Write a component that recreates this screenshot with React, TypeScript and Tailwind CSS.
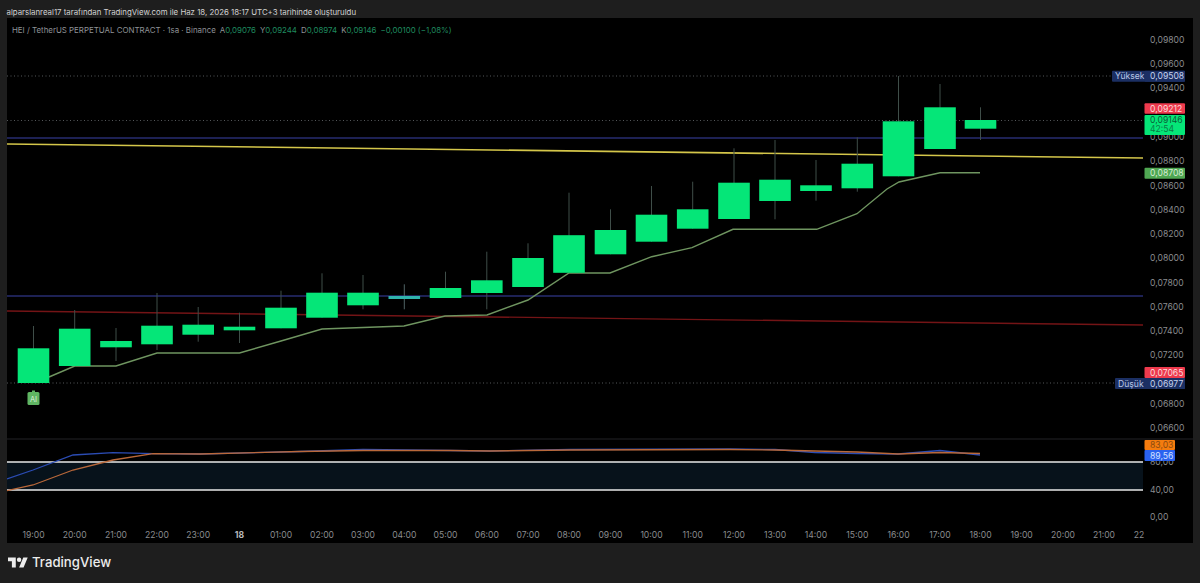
import React from 'react';

const FONT = 'font-[Inter,"Liberation_Sans",sans-serif]';

// [center x, body top, body bottom, wick top, wick bottom]
const candles: number[][] = [
  [33.5, 348.3, 383, 326, 383],
  [74.7, 328.7, 366, 310, 366],
  [116, 341, 347.3, 328, 361],
  [157, 325.7, 344.3, 293, 350],
  [198.2, 324.7, 334.7, 307, 341.7],
  [239.5, 326.7, 330.3, 312.7, 343],
  [281, 307.7, 328.3, 290.7, 328.3],
  [322, 292.7, 317.7, 273.3, 317.7],
  [363, 292.7, 305.3, 275, 309.3],
  [404.3, 296, 299, 284.3, 309.3],
  [445.5, 288, 298, 271.7, 298],
  [486.8, 280.3, 293, 251.7, 309.3],
  [528, 258, 287, 243.3, 287],
  [569, 235.2, 272.8, 192.7, 272.8],
  [610.5, 230, 254.3, 209.3, 254.3],
  [651.5, 214.7, 241.7, 186, 241.7],
  [692.7, 209.3, 228.7, 181.7, 228.7],
  [734, 182.7, 219, 148.3, 219],
  [775, 179.7, 201, 140, 219.3],
  [816, 185.3, 191, 160, 200.7],
  [857.3, 163.7, 188.3, 137.3, 191.7],
  [898.5, 121.3, 176.3, 76, 176.3],
  [940, 107.3, 149, 84, 149],
  [980.5, 120, 128.7, 107.3, 140],
];

const prices: [string, number][] = [
  ['0,09800', 39.5], ['0,09600', 63.8], ['0,09400', 88.1], ['0,09000', 137], ['0,08800', 161.3],
  ['0,08600', 185.6], ['0,08400', 209.6], ['0,08200', 233.9], ['0,08000', 258.2], ['0,07800', 282.5],
  ['0,07600', 306.8], ['0,07400', 331.1], ['0,07200', 355.4], ['0,06800', 404], ['0,06600', 428.3],
  ['80,00', 461.5], ['40,00', 489.7], ['0,00', 517],
];

const times: [string, number][] = [
  ['19:00', 33.5], ['20:00', 74.7], ['21:00', 116], ['22:00', 157], ['23:00', 198.2], ['18', 239.5],
  ['01:00', 281], ['02:00', 322], ['03:00', 363], ['04:00', 404.3], ['05:00', 445.5], ['06:00', 486.8],
  ['07:00', 528], ['08:00', 569], ['09:00', 610.5], ['10:00', 651.5], ['11:00', 692.7], ['12:00', 734],
  ['13:00', 775], ['14:00', 816], ['15:00', 857.3], ['16:00', 898.5], ['17:00', 940], ['18:00', 980.5],
  ['19:00', 1021.7], ['20:00', 1063], ['21:00', 1104], ['22', 1139],
];

const sma = '49,377 74.7,366 116,366 157,353 239.5,353 281,341 322,329 404,326 445,316 487,315 528,300 569,273 610,273 651.7,256.7 692,247.7 733,229.3 816.7,229.3 857,213.7 887,189 899,182 940,172.7 980,172.7';
const rsiBlue = '7,479 33,470 73,455 113,452.7 153,453.7 200,454 300,451.5 363,449.5 450,450.5 490,451 570,449.5 730,449 775,449.5 815,452.5 857,453.5 898,454 940,450.5 980,455';
const rsiOrange = '7,490.7 33,485 73,470 113,460 153,453.7 200,454 300,451.5 363,450.5 450,450.5 490,451 570,450 730,449.5 775,450 815,451 857,452 898,454 940,452.5 980,453.5';

type TagProps = { x: number; y: number; w: number; h: number; fill: string; label: string; color: string };

function Tag({ x, y, w, h, fill, label, color }: TagProps) {
  return (
    <g>
      <rect x={x} y={y} width={w} height={h} rx={1} fill={fill} />
      <text x={1150} y={y + h / 2 + 3} fontSize={8.6} fill={color}>{label}</text>
    </g>
  );
}

function Chart() {
  return (
    <svg className={`block w-full h-full ${FONT}`} viewBox="7 18 1186 525">
      <line x1={7} y1={439} x2={1193} y2={439} stroke="#222326" />
      <rect x={7} y={462} width={1136} height={28} fill="#07121b" />

      <g stroke="#55585b" strokeWidth={1} strokeDasharray="1 2.5">
        <line x1={7} y1={76} x2={1112} y2={76} />
        <line x1={7} y1={120.5} x2={1143} y2={120.5} />
        <line x1={7} y1={383} x2={1115} y2={383} />
      </g>
      <line x1={7} y1={138} x2={1143} y2={138} stroke="#272c70" strokeWidth={1.3} />
      <line x1={7} y1={296} x2={1143} y2={296} stroke="#272c70" strokeWidth={1.3} />
      <line x1={7} y1={311} x2={1143} y2={325} stroke="#741416" strokeWidth={1.4} />
      <line x1={7} y1={144} x2={1143} y2={158} stroke="#d4c64a" strokeWidth={1.6} />

      <polyline points={sma} fill="none" stroke="#6f9560" strokeWidth={1.4} />

      {candles.map(([x, top, bottom, high, low], i) => (
        <g key={i}>
          <line x1={x} y1={high} x2={x} y2={low} stroke={i === 9 ? '#4f6364' : '#3f4e49'} strokeWidth={1} />
          <rect x={x - 15.8} y={top} width={31.6} height={bottom - top} fill={i === 9 ? '#2fb3ad' : '#05e678'} />
        </g>
      ))}

      <line x1={7} y1={462} x2={1143} y2={462} stroke="#e8e8e8" strokeWidth={1.4} />
      <line x1={7} y1={490} x2={1143} y2={490} stroke="#e8e8e8" strokeWidth={1.4} />
      <polyline points={rsiBlue} fill="none" stroke="#2b4cb4" strokeWidth={1.3} />
      <polyline points={rsiOrange} fill="none" stroke="#b9683a" strokeWidth={1.3} />

      {/* AI marker */}
      <rect x={27.5} y={392} width={12} height={13} rx={1.5} fill="#5fb562" />
      <rect x={32} y={390.5} width={3} height={2} fill="#5fb562" />
      <text x={33.5} y={402} fontSize={7.5} textAnchor="middle" fill="#d9f0da">AI</text>

      <g fontSize={8.6} fill="#8a8c8f">
        {prices.map(([label, y]) => (
          <text key={label} x={1150} y={y + 3}>{label}</text>
        ))}
        {times.map(([label, x], i) => (
          <text key={i} x={x} y={538} textAnchor="middle" fontWeight={label === '18' ? 700 : 400} fill={label === '18' ? '#b8babc' : '#8a8c8f'}>{label}</text>
        ))}
      </g>

      <rect x={1112} y={70.7} width={73} height={11} rx={1} fill="#1b2f63" />
      <text x={1115} y={79} fontSize={8.6} fill="#b9c6e6">Yüksek</text>
      <Tag x={1144.5} y={70.7} w={40.5} h={11} fill="#1b2f63" label="0,09508" color="#c6d2ee" />
      <Tag x={1144.5} y={103.3} w={40.5} h={10.5} fill="#ee3a4d" label="0,09212" color="#fbd9dc" />
      <rect x={1144.5} y={115} width={40.5} height={20} rx={1} fill="#05e678" />
      <text x={1150} y={122.5} fontSize={8.6} fill="#0a5c36">0,09146</text>
      <text x={1150} y={132} fontSize={8.6} fill="#0a7a46">42:54</text>
      <Tag x={1144.5} y={167.7} w={40.5} h={11} fill="#4fa752" label="0,08708" color="#d5edd6" />
      <Tag x={1144.5} y={367} w={40.5} h={11} fill="#ee3a4d" label="0,07065" color="#fbd9dc" />
      <rect x={1115} y={378} width={70} height={11} rx={1} fill="#1b2f63" />
      <text x={1118} y={386.5} fontSize={8.6} fill="#b9c6e6">Düşük</text>
      <Tag x={1144.5} y={378} w={40.5} h={11} fill="#1b2f63" label="0,06977" color="#c6d2ee" />
      <Tag x={1144.5} y={440} w={30.5} h={10} fill="#f57c0e" label="83,03" color="#8a4a10" />
      <Tag x={1144.5} y={450} w={30.5} h={11} fill="#2a62f0" label="89,56" color="#d3e0ff" />
    </svg>
  );
}

function Legend() {
  const values = [['A', '0,09076'], ['Y', '0,09244'], ['D', '0,08974'], ['K', '0,09146']];
  return (
    <div className="absolute left-[5px] top-[5.5px] flex gap-[4px] text-[7.9px] leading-[12px] text-[#8f9296] whitespace-nowrap">
      <span>HEI / TetherUS PERPETUAL CONTRACT · 1sa · Binance</span>
      {values.map(([k, v]) => (
        <span key={k}>{k}<span className="text-[#1f8a5f]">{v}</span></span>
      ))}
      <span className="text-[#1f8a5f]">−0,00100 (−1,08%)</span>
    </div>
  );
}

export default function App() {
  return (
    <div className={`w-[1200px] h-[583px] flex flex-col bg-[#1e1e1e] overflow-hidden ${FONT}`}>
      <div className="h-[18px] pl-[6.5px] pt-[6px] text-[7.85px] leading-[12px] text-[#d2d2d2] whitespace-nowrap">
        alparslanreal17 tarafından TradingView.com ile Haz 18, 2026 18:17 UTC+3 tarihinde oluşturuldu
      </div>
      <div className="relative ml-[7px] w-[1186px] h-[525px] bg-black">
        <Chart />
        <Legend />
      </div>
      <div className="flex-1 flex items-center gap-[4.5px] pl-[7.5px] text-[#ececec]">
        <svg className="w-[20px] h-[16px]" viewBox="0 0 36 28" fill="currentColor">
          <path d="M14 22H7V11H0V4h14v18zM28 22h-8l7.5-18h8L28 22z" />
          <circle cx="20" cy="8" r="4" />
        </svg>
        <span className="text-[13.2px] font-medium leading-none">TradingView</span>
      </div>
    </div>
  );
}
